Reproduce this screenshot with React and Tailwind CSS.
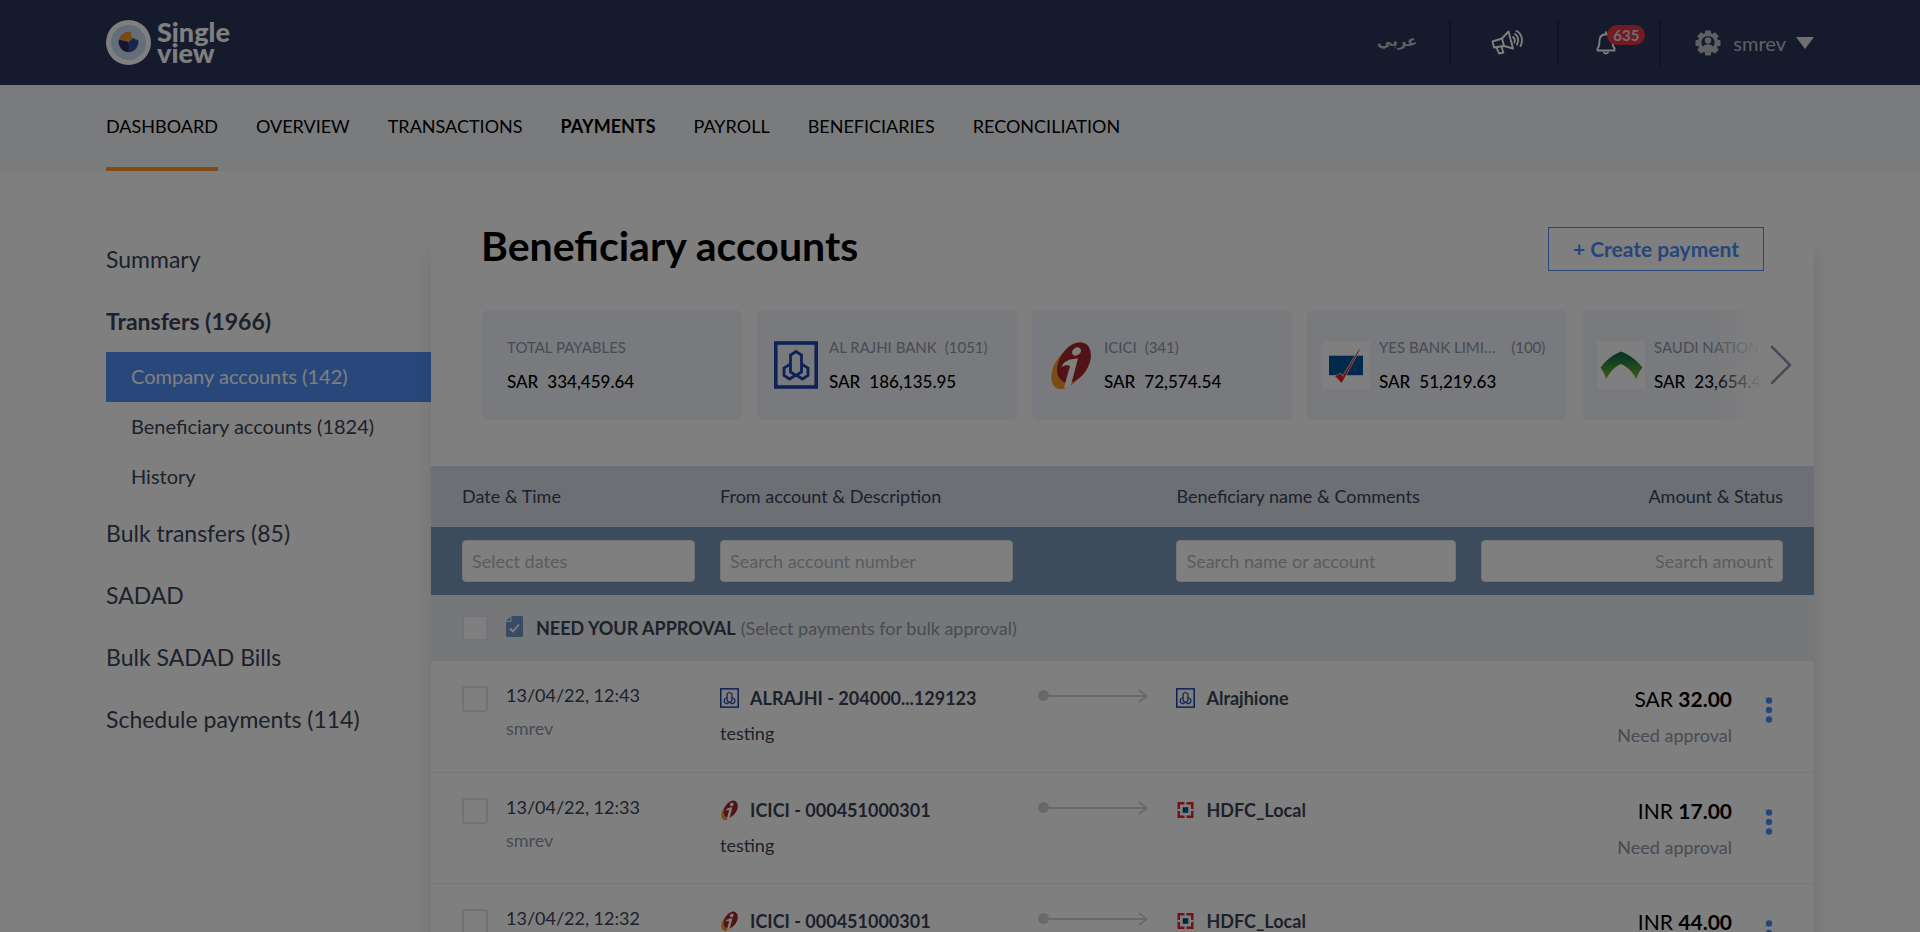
import React from "react";

const NAV = ["DASHBOARD", "OVERVIEW", "TRANSACTIONS", "PAYMENTS", "PAYROLL", "BENEFICIARIES", "RECONCILIATION"];

const CARDS = [
  { label: "TOTAL PAYABLES", amount: "334,459.64" },
  { bank: "rajhi", label: "AL RAJHI BANK", count: "(1051)", amount: "186,135.95" },
  { bank: "icici", label: "ICICI", count: "(341)", amount: "72,574.54" },
  { bank: "yes", label: "YES BANK LIMI…", count: "(100)", amount: "51,219.63", wide: true },
  { bank: "snb", label: "SAUDI NATION…", amount: "23,654.43", wide: true },
];

const ROWS = [
  { date: "13/04/22, 12:43", user: "smrev", bank: "rajhi", account: "ALRAJHI - 204000...129123", note: "testing", toBank: "rajhi", to: "Alrajhione", cur: "SAR", amount: "32.00" },
  { date: "13/04/22, 12:33", user: "smrev", bank: "icici", account: "ICICI - 000451000301", note: "testing", toBank: "hdfc", to: "HDFC_Local", cur: "INR", amount: "17.00" },
  { date: "13/04/22, 12:32", user: "smrev", bank: "icici", account: "ICICI - 000451000301", note: "testing", toBank: "hdfc", to: "HDFC_Local", cur: "INR", amount: "44.00" },
];

function BankLogo({ bank, className }) {
  if (bank === "rajhi") {
    return (
      <svg viewBox="0 0 44 48" preserveAspectRatio="none" className={className} aria-hidden="true">
        <rect x="1.8" y="2" width="40.400" height="44" fill="none" stroke="#1c45ac" strokeWidth="3.600" />
        <g fill="none" stroke="#1c45ac" strokeWidth="2.800">
          <path d="M22 10.500 L27.500 14 V31 L22 34.500 L16.500 31 V14 Z" />
          <path d="M16.500 23 L10 27 V34.500 L15.500 38 L22 34" />
          <path d="M27.500 23 L34 27 V34.500 L28.500 38 L22 34" />
        </g>
      </svg>
    );
  }
  if (bank === "icici") {
    return (
      <svg viewBox="0 0 44 48" className={className} aria-hidden="true">
        <ellipse cx="19.500" cy="27" rx="14" ry="23.500" transform="rotate(32 19.500 27)" fill="#f39a2b" />
        <ellipse cx="25" cy="21.500" rx="14.500" ry="22" transform="rotate(32 25 21.500)" fill="#a3262b" />
        <ellipse cx="27.500" cy="10.500" rx="4.800" ry="3.800" transform="rotate(-35 27.500 10.500)" fill="#fff" />
        <path d="M12.500 26 C14 21 20 17.500 29 17.500 L22 44 C20 47 17 47.500 15 46.500 L21 25 C19 23.500 15.500 24 12.500 26 Z" fill="#fff" />
      </svg>
    );
  }
  if (bank === "yes") {
    return (
      <svg viewBox="0 0 48 48" preserveAspectRatio="none" className={className} aria-hidden="true">
        <rect width="48" height="48" fill="#fff" />
        <rect x="7" y="14.700" width="34" height="19.500" fill="#00549a" />
        <path d="M13.500 35 L18.500 33 L20.500 36 L37.500 8.500 L19.500 41.500 Z" fill="#e3242e" stroke="#fff" strokeWidth="1.600" paintOrder="stroke" />
        <path d="M13.500 35 L18.500 33 L20.500 36 L37.500 8.500 L19.500 41.500 Z" fill="#e3242e" stroke="#e3242e" strokeWidth="0.500" />
      </svg>
    );
  }
  if (bank === "snb") {
    return (
      <svg viewBox="0 0 48 48" preserveAspectRatio="none" className={className} aria-hidden="true">
        <defs>
          <linearGradient id="snb" x1="0" y1="0" x2="0" y2="1">
            <stop offset="0.1" stopColor="#0b6b4b" />
            <stop offset="1" stopColor="#78b72b" />
          </linearGradient>
        </defs>
        <rect width="48" height="48" fill="#fff" />
        <path d="M24 10.500 C33 14 40 19.500 45.500 26.500 C42.500 30 40.500 33.500 39.500 38 C35.500 31 31 26 24 23 C17 26 13 31 9 38 C8 33.500 6 30 3.500 26.500 C9 19.500 15 14 24 10.500 Z" fill="url(#snb)" />
      </svg>
    );
  }
  return (
    <svg viewBox="0 0 18 20" className={className} aria-hidden="true">
      <rect x="1" y="2" width="16" height="16" fill="#ed232a" />
      <rect x="3.500" y="4.500" width="11" height="11" fill="#fff" />
      <path d="M8 2 h2 v16 h-2 z M1 9 h16 v2 h-16 z" fill="#fff" />
      <rect x="6.200" y="7.200" width="5.600" height="5.600" fill="#004c8f" />
    </svg>
  );
}

function Brand() {
  return (
    <a href="#home" className="flex items-center gap-[6px] text-white">
      <svg viewBox="0 0 45 45" className="size-[45px]" aria-hidden="true">
        <circle cx="22.500" cy="22.500" r="22.500" fill="#fff" />
        <circle cx="22.500" cy="22.500" r="17.500" fill="#c9dcf0" />
        <path d="M22.500 22 L13 19.500 A10 10 0 0 1 25.500 12.200 A4 4 0 0 0 27.500 18 Z" fill="#f0922b" />
        <path d="M22.500 22 L13 19.500 A10 10 0 0 0 24 32 Z" fill="#262c5c" />
        <path d="M22.500 22 L27.500 18 Q30 20.500 32 19.500 A10 10 0 0 1 24 32 Z" fill="#2c4c9c" />
      </svg>
      <span className="pb-[2px] text-[27px] leading-[21px] font-black">
        Single
        <br />
        view
      </span>
    </a>
  );
}

function Megaphone() {
  return (
    <svg viewBox="0 0 32 25" className="h-[25px] w-8" fill="none" stroke="#fff" strokeWidth="1.900" strokeLinejoin="round" strokeLinecap="round" aria-hidden="true">
      <path d="M1.500 11.500 L11 8.500 L17.500 1.500 L22 18.500 L13 16 L3 17.500 Z" />
      <path d="M11 8.500 L13 16" />
      <path d="M5.500 17.500 L8 23.500 L12.500 22.500 L11.500 20 L10.500 16.500" />
      <path d="M22 7 C23.800 8.500 24.200 10.500 23.400 12.500" />
      <path d="M24 4 C27.500 6.500 28 11 26 14.500" />
      <path d="M25.500 1 C31.500 4 32 11.500 29.500 16" />
    </svg>
  );
}

function Bell() {
  return (
    <svg viewBox="0 0 20 24" className="h-6 w-5" fill="none" stroke="#fff" strokeWidth="1.900" strokeLinejoin="round" strokeLinecap="round" aria-hidden="true">
      <path d="M1.500 19.500 V17.500 C3.500 15.500 3.500 13.500 3.500 9.500 C3.500 6 6 3.500 10 3.300 C14 3.500 16.500 6 16.500 9.500 C16.500 13.500 16.500 15.500 18.500 17.500 V19.500 Z" />
      <path d="M10 3 V1.300 M8 21.500 C8.500 23 11.500 23 12 21.500" />
    </svg>
  );
}

function GearUser() {
  return (
    <svg viewBox="0 0 26 26" className="size-[26px]" aria-hidden="true">
      <g fill="#bcc1c6">
        {[0, 45, 90, 135].map((a) => (
          <rect key={a} x="10" y="0.500" width="6" height="25" rx="1" transform={`rotate(${a} 13 13)`} />
        ))}
        <circle cx="13" cy="13" r="10.200" />
      </g>
      <circle cx="13" cy="12.500" r="6.600" fill="#2c345a" />
      <circle cx="13" cy="10.500" r="3.200" fill="#bcc1c6" />
      <path d="M7.500 18.500 C8 15.500 10 14.200 13 14.200 C16 14.200 18 15.500 18.500 18.500 L13 21 Z" fill="#bcc1c6" />
    </svg>
  );
}

function Header() {
  return (
    <header className="flex h-[85px] items-center justify-between bg-[#2c345a] px-[106px]">
      <Brand />
      <div className="flex items-center text-[#bcc1c6]">
        <a href="#ar" lang="ar" className="pr-8 pb-[3px] font-['DejaVu_Sans',sans-serif] text-[15px] font-bold">عربي</a>
        <div className="flex h-[46px] items-center border-l-2 border-[#20264a] pr-[34px] pl-10">
          <button type="button" aria-label="Announcements"><Megaphone /></button>
        </div>
        <div className="flex h-[46px] items-center border-l-2 border-[#20264a] pr-[43px] pl-[37px]">
          <button type="button" aria-label="Notifications" className="relative">
            <Bell />
            <span className="absolute -top-[6px] left-[11px] rounded-full bg-[#e83446] px-[6px] text-[15px] leading-5 font-bold text-[#dcdcdc]">635</span>
          </button>
        </div>
        <button type="button" className="flex h-[46px] items-center border-l-2 border-[#20264a] pl-[34px]">
          <GearUser />
          <span className="pr-[10px] pl-3 text-[20px]">smrev</span>
          <svg viewBox="0 0 18 12" className="h-3 w-[18px]" aria-hidden="true">
            <path d="M0 0 H18 L9 12 Z" fill="#e0e0e0" />
          </svg>
        </button>
      </div>
    </header>
  );
}

function Nav() {
  return (
    <nav className="flex h-[86px] gap-[38px] bg-[#f4f6fb] px-[106px] text-[18px]">
      {NAV.map((item) => (
        <a
          key={item}
          href={"#" + item.toLowerCase()}
          className={
            "flex items-center border-b-4 " +
            (item === "DASHBOARD" ? "border-[#fe9426] " : "border-transparent ") +
            (item === "PAYMENTS" ? "font-bold" : "")
          }
        >
          {item}
        </a>
      ))}
    </nav>
  );
}

function Sidebar() {
  const top = "flex h-[62px] items-center";
  const sub = "flex h-[50px] items-center pb-[2px] pl-[25px] text-[20px]";
  return (
    <aside className="w-[325px] shrink-0 pt-[57px] text-[23px] text-[#3a4356]">
      <a href="#summary" className={top}>Summary</a>
      <a href="#transfers" className={top + " font-bold"}>Transfers (1966)</a>
      <a href="#company" className={sub + " bg-[#5090f8] text-white"}>Company accounts (142)</a>
      <a href="#beneficiary" className={sub}>Beneficiary accounts (1824)</a>
      <a href="#history" className={sub}>History</a>
      <a href="#bulk" className={top}>Bulk transfers (85)</a>
      <a href="#sadad" className={top}>SADAD</a>
      <a href="#bills" className={top}>Bulk SADAD Bills</a>
      <a href="#schedule" className={top}>Schedule payments (114)</a>
    </aside>
  );
}

function Card({ card }) {
  return (
    <div className={"flex h-[110px] w-[260px] shrink-0 items-center rounded-md bg-[#f3f4fb] pb-[2px] " + (card.bank ? "gap-[9px] pl-[15px]" : "pl-[25px]")}>
      {card.bank && (
        <span className="flex w-12 shrink-0 justify-center pt-[2px]">
          <BankLogo bank={card.bank} className={card.wide ? "h-12 w-12" : "h-12 w-11"} />
        </span>
      )}
      <div className="whitespace-nowrap">
        <div className={"flex text-[15px] leading-6 text-[#8f97a8] " + (card.wide ? "gap-4" : "gap-2")}>
          <span>{card.label}</span>
          {card.count && <span>{card.count}</span>}
        </div>
        <div className="mt-[11px] flex gap-[9px] text-[17px] leading-6 font-medium text-black">
          <span>SAR</span>
          <span>{card.amount}</span>
        </div>
      </div>
    </div>
  );
}

function Arrow() {
  return (
    <svg viewBox="0 0 110 14" className="mt-7 h-[14px] w-[110px]" fill="none" stroke="#d2d3d6" strokeWidth="1.800" aria-hidden="true">
      <circle cx="5.500" cy="6.500" r="5.500" fill="#d2d3d6" stroke="none" />
      <path d="M6 7 H108 M101 1 L109 7 L101 13" />
    </svg>
  );
}

function PaymentRow({ row, index }) {
  const box = "size-[26px] shrink-0 appearance-none rounded-[3px] border-2 border-[#e1e4e9] bg-white";
  return (
    <tr className="h-[111px] border-b border-[#eeeff2] align-top">
      <td className="pt-[25px] pl-[31px]">
        <div className="flex gap-[18px]">
          <input type="checkbox" aria-label={"Select payment " + (index + 1)} className={box} />
          <div className="-mt-[3px]">
            <div className="leading-6">{row.date}</div>
            <div className="mt-[9px] leading-6 text-[#8f97a8]">{row.user}</div>
          </div>
        </div>
      </td>
      <td className="pt-[25px]">
        <div className="flex items-center gap-[11px] leading-6 font-bold whitespace-nowrap">
          <BankLogo bank={row.bank} className="h-5 w-[19px]" />
          {row.account}
        </div>
        <div className="mt-[11px] leading-6">{row.note}</div>
      </td>
      <td><Arrow /></td>
      <td className="pt-[25px]">
        <div className="flex items-center gap-[11px] leading-6 font-bold">
          <BankLogo bank={row.toBank} className="h-5 w-[19px]" />
          {row.to}
        </div>
      </td>
      <td className="pt-[26px] pr-[40px]">
        <div className="flex justify-end gap-8">
          <div className="text-right">
            <div className="text-[21px] leading-6 text-black">
              {row.cur} <b>{row.amount}</b>
            </div>
            <div className="mt-3 leading-6 text-[#8f97a8]">Need approval</div>
          </div>
          <button type="button" aria-label="Payment actions" className="mt-[10px] h-[26px]">
            <svg viewBox="0 0 10 26" className="h-[26px] w-[10px]" fill="#4c8df2" aria-hidden="true">
              <circle cx="5" cy="3.500" r="3.200" />
              <circle cx="5" cy="13" r="3.200" />
              <circle cx="5" cy="22.500" r="3.200" />
            </svg>
          </button>
        </div>
      </td>
    </tr>
  );
}

function PaymentsTable() {
  const field = "block h-[42px] w-full rounded border border-[#e4e8ef] bg-white px-[9px] placeholder:text-[#b4b8c0]";
  return (
    <table className="mt-[46px] w-full table-fixed border-collapse text-[18px] text-[#3a4356]">
      <colgroup>
        <col className="w-[20.9%]" />
        <col className="w-[23%]" />
        <col className="w-[10%]" />
        <col className="w-[22%]" />
        <col className="w-[24.1%]" />
      </colgroup>
      <thead>
        <tr className="h-[61px] bg-[#d8dfe8] text-left">
          <th className="pl-[31px] font-normal">Date &amp; Time</th>
          <th colSpan={2} className="font-normal">From account &amp; Description</th>
          <th className="font-normal">Beneficiary name &amp; Comments</th>
          <th className="pr-[31px] text-right font-normal">Amount &amp; Status</th>
        </tr>
        <tr className="h-[68px] bg-[#7a98ba]">
          <td className="pr-[25px] pl-[31px]"><input aria-label="Dates" placeholder="Select dates" className={field} /></td>
          <td className="pr-[25px]"><input aria-label="Account number" placeholder="Search account number" className={field} /></td>
          <td />
          <td className="pr-[25px]"><input aria-label="Name or account" placeholder="Search name or account" className={field} /></td>
          <td className="pr-[31px]"><input aria-label="Amount" placeholder="Search amount" className={field + " text-right"} /></td>
        </tr>
      </thead>
      <tbody>
        <tr className="h-[66px] bg-[#eceff3]">
          <td colSpan={5} className="pl-[31px]">
            <label className="flex items-center">
              <input type="checkbox" className="size-[26px] appearance-none rounded-[3px] border-2 border-[#e4e8f2] bg-white" />
              <svg viewBox="0 0 17 21" className="mr-[13px] mb-[3px] ml-[18px] h-[21px] w-[17px]" aria-hidden="true">
                <path d="M5.500 0 H15.500 Q17 0 17 1.500 V19.500 Q17 21 15.500 21 H1.500 Q0 21 0 19.500 V6 H5.500 Z M4.300 0.800 V4.800 H0.300 Z" fill="#6f98c8" />
                <path d="M4 12.500 L7 15.500 L13 8.500" fill="none" stroke="#fff" strokeWidth="1.800" />
              </svg>
              <span className="font-bold">NEED YOUR APPROVAL</span>
              <span className="pl-[5px] text-[#8f97a8]">(Select payments for bulk approval)</span>
            </label>
          </td>
        </tr>
        {ROWS.map((row, i) => (
          <PaymentRow key={i} row={row} index={i} />
        ))}
      </tbody>
    </table>
  );
}

export default function App() {
  return (
    <div className="h-screen overflow-hidden bg-white font-['Lato','Noto_Sans',sans-serif] text-black">
      <Header />
      <Nav />
      <div className="flex px-[106px]">
        <Sidebar />
        <main className="min-w-0 flex-1 bg-white pt-[50px] shadow-[0_80px_20px_rgba(60,70,90,0.16)]">
          <div className="flex items-start justify-between px-[50px]">
            <h1 className="text-[41px] leading-[50px] font-bold">Beneficiary accounts</h1>
            <button type="button" className="mt-[6px] h-11 border border-[#4c8df2] px-6 text-[21px] font-bold text-[#4c8df2]">+ Create payment</button>
          </div>
          <div className="relative mx-[51px] mt-[39px]">
            <div className="flex gap-[15px] overflow-hidden">
              {CARDS.map((card) => (
                <Card key={card.label} card={card} />
              ))}
            </div>
            <div className="absolute inset-y-0 right-0 w-[52px] bg-linear-to-r from-white/0 to-white" />
            <button type="button" aria-label="Next banks" className="absolute top-[35px] left-full ml-[7px]">
              <svg viewBox="0 0 22 40" className="h-10 w-[22px]" fill="none" stroke="#8f97a8" strokeWidth="2.600" strokeLinecap="round" strokeLinejoin="round" aria-hidden="true">
                <path d="M2 2 L20 20 L2 38" />
              </svg>
            </button>
          </div>
          <PaymentsTable />
        </main>
      </div>
      <div className="fixed inset-0 bg-black/50" aria-hidden="true" />
    </div>
  );
}
